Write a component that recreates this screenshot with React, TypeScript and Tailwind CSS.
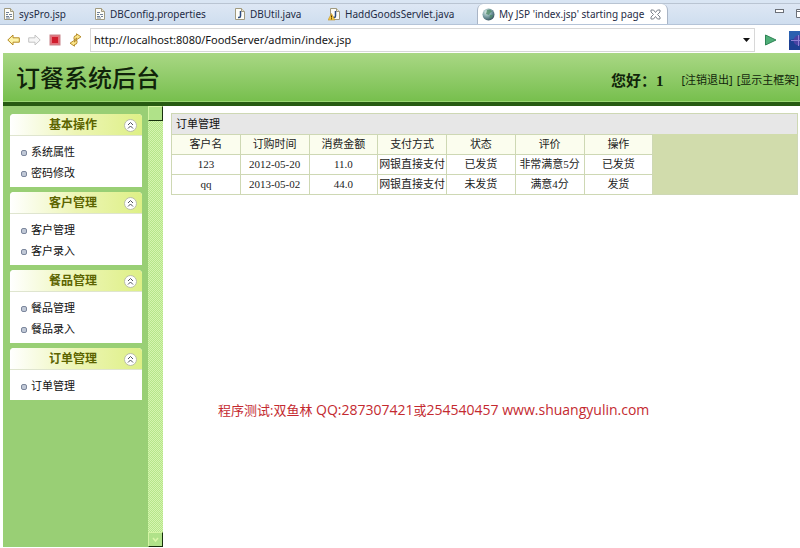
import React from "react";

const MENU = [
  { title: "基本操作", items: ["系统属性", "密码修改"] },
  { title: "客户管理", items: ["客户管理", "客户录入"] },
  { title: "餐品管理", items: ["餐品管理", "餐品录入"] },
  { title: "订单管理", items: ["订单管理"] },
];

const COLUMNS = ["客户名", "订购时间", "消费金额", "支付方式", "状态", "评价", "操作"];

const ORDERS = [
  ["123", "2012-05-20", "11.0", "网银直接支付", "已发货", "非常满意5分", "已发货"],
  ["qq", "2013-05-02", "44.0", "网银直接支付", "未发货", "满意4分", "发货"],
];

type FileKind = "text" | "java" | "warning";

const TABS: { name: string; kind: FileKind; width: string }[] = [
  { name: "sysPro.jsp", kind: "text", width: "w-[91px]" },
  { name: "DBConfig.properties", kind: "text", width: "w-[140px]" },
  { name: "DBUtil.java", kind: "java", width: "w-[95px]" },
  { name: "HaddGoodsServlet.java", kind: "warning", width: "w-[149px]" },
];

function FileIcon({ kind }: { kind: FileKind }) {
  return (
    <svg width="13" height="14" viewBox="0 0 13 14" className="shrink-0" aria-hidden="true">
      <path d="M2.5 1.5h6l3 3v8h-9z" fill="#fdfdf8" stroke="#a09a80" />
      <path d="M8.5 1.5v3h3" fill="#e8e2c8" stroke="#a09a80" />
      {kind === "text" ? (
        <path d="M4 5.5h3M4 7.5h2m1 0h3M4 9.5h3m1 0h2M4 11h4" stroke="#6f8098" />
      ) : (
        <path d="M7.5 4v5q0 1.5-1.5 1.5h-1" fill="none" stroke="#2d4d80" strokeWidth="1.5" />
      )}
      {kind === "warning" && (
        <>
          <path d="M3.5 6.5L7 13H0z" fill="#f5c83c" stroke="#c2922a" strokeWidth=".6" />
          <path d="M3.5 8.5v2m0 .8v1" stroke="#4a3200" />
        </>
      )}
    </svg>
  );
}

function GlobeIcon() {
  return (
    <svg width="13" height="13" viewBox="0 0 13 13" className="shrink-0" aria-hidden="true">
      <defs>
        <radialGradient id="globe" cx=".35" cy=".3" r=".8">
          <stop offset="0" stopColor="#dfeee9" />
          <stop offset=".5" stopColor="#7a9fa4" />
          <stop offset="1" stopColor="#2c4654" />
        </radialGradient>
      </defs>
      <circle cx="6.5" cy="6.5" r="6" fill="url(#globe)" />
      <path d="M5 2l3-.5 2 2-2 1.5-1 2-3-1zM8 7l3 0-1.5 3-2 .5z" fill="#4f8a68" opacity=".8" />
    </svg>
  );
}

function Tabs() {
  return (
    <div className="flex h-[25px] overflow-hidden border-b border-[#b5c4d8] bg-[#d9e5f3] pt-[3px] text-[10px] text-[#1e2b45]">
      <div className="flex min-w-0 flex-1 border-t border-[#b9c4d2] bg-linear-to-b from-[#dde7f4] to-[#cfdeef] pl-0.5">
        {TABS.map((tab) => (
          <button key={tab.name} className={`flex shrink-0 items-center gap-1 ${tab.width}`}>
            <FileIcon kind={tab.kind} />
            <span className="whitespace-nowrap">{tab.name}</span>
          </button>
        ))}
        <div className="flex w-[191px] shrink-0 items-center gap-1 rounded-t-md border-x border-[#a9b5c6] bg-white pl-1">
          <GlobeIcon />
          <button className="whitespace-nowrap">My JSP &apos;index.jsp&apos; starting page</button>
          <button aria-label="Close tab" className="ml-auto mr-1.5">
            <svg width="11" height="11" viewBox="0 0 11 11" fill="#fff" stroke="#7d838c">
              <path d="M1 1h2.5l2 2.5 2-2.5H10v2L7.5 5.5 10 8v2H7.5l-2-2.5-2 2.5H1V8l2.5-2.5L1 3z" />
            </svg>
          </button>
        </div>
        <div className="ml-auto flex items-start gap-3 pt-[5px]">
          <button aria-label="Minimize">
            <svg width="9" height="4" viewBox="0 0 9 4">
              <rect x=".5" y=".5" width="8" height="3" fill="#fff" stroke="#6b7078" />
            </svg>
          </button>
          <button aria-label="Maximize" className="w-1 overflow-hidden">
            <svg width="9" height="9" viewBox="0 0 9 9" className="max-w-none">
              <path d="M.5.5h8v8h-8zM.5 2.5h8" fill="#fff" stroke="#6b7078" />
            </svg>
          </button>
        </div>
      </div>
    </div>
  );
}

function AddressBar() {
  return (
    <div className="flex h-7 items-start overflow-hidden bg-white pl-[7px] pt-[3px]">
      <div className="flex h-6 items-center gap-2 pr-2">
        <button aria-label="Back">
          <svg width="13" height="12" viewBox="0 0 13 12">
            <path d="M.8 6L6 1v2.8h6.3v4.4H6V11z" fill="#fdf3a8" stroke="#b58a22" />
          </svg>
        </button>
        <button aria-label="Forward">
          <svg width="13" height="12" viewBox="0 0 13 12">
            <path d="M12.2 6L7 1v2.8H.7v4.4H7V11z" fill="#f6f6f6" stroke="#c3c3c3" />
          </svg>
        </button>
        <button aria-label="Stop">
          <svg width="12" height="12" viewBox="0 0 12 12">
            <rect x="1" y="1" width="10" height="10" fill="#e4707a" stroke="#c8848a" />
            <rect x="3" y="3" width="6" height="6" fill="#d01c2c" />
          </svg>
        </button>
        <button aria-label="Refresh">
          <svg width="13" height="14" viewBox="0 0 13 14" fill="#fbe58a" stroke="#b08420" strokeWidth=".9">
            <path d="M5 6.5V4.5q0-2 2.5-2V.8l4.500 3-4.500 3V5q-.8 0-.8 1.500z" />
            <path d="M8 7.5v2q0 2-2.5 2v1.700L1 10.200l4.500-3V9q.8 0 .8-1.500z" />
          </svg>
        </button>
      </div>
      <div className="flex h-6 min-w-0 flex-1 items-center border border-[#d8d8d8] pr-1">
        <input
          aria-label="Address"
          defaultValue="http://localhost:8080/FoodServer/admin/index.jsp"
          className="min-w-0 flex-1 bg-transparent pl-[3px] text-[11px] text-[#151515] outline-none"
        />
        <button aria-label="History">
          <svg width="7" height="4" viewBox="0 0 7 4">
            <path d="M0 0h7L3.5 4z" fill="#111" />
          </svg>
        </button>
      </div>
      <div className="flex h-6 items-center gap-3 pl-[9px]">
        <button aria-label="Go">
          <svg width="13" height="12" viewBox="0 0 13 12">
            <path d="M1.5 1L12 6 1.5 11z" fill="#4fae78" stroke="#2f8455" />
          </svg>
        </button>
        <button aria-label="Open browser" className="w-[11px] overflow-hidden">
          <svg width="19" height="19" viewBox="0 0 19 19" className="max-w-none">
            <rect width="19" height="19" fill="#1d3f92" />
            <path d="M0 0h19v5L0 9z" fill="#2a60b0" />
            <circle cx="9.500" cy="9.500" r="5" fill="#4a42a4" />
            <path d="M2 9.5h15M9.5 4v11" stroke="#8f80d4" />
          </svg>
        </button>
      </div>
    </div>
  );
}

function Header() {
  return (
    <header className="flex h-[53px] items-center border-b-4 border-[#265a12] bg-linear-to-b from-[#a9d784] to-[#76bf4c] pl-[13px] text-[#10240a] shadow-[inset_0_-1px_0_#9ad673]">
      <h1 className="text-[24px] font-medium">订餐系统后台</h1>
      <div className="ml-auto flex items-center whitespace-nowrap pr-px pt-1.5">
        <strong className="mr-[18px] text-[15px]">
          您好：<span className="font-['Liberation_Serif']">1</span>
        </strong>
        <div className="flex gap-1 text-[11px]">
          <a href="#logout">[注销退出]</a>
          <a href="#frame">[显示主框架]</a>
        </div>
      </div>
    </header>
  );
}

function MenuCard({ title, items }: { title: string; items: string[] }) {
  return (
    <section className="rounded-t bg-white">
      <div className="flex h-[22px] items-center rounded-t bg-linear-to-r from-white via-[#edf5b4] to-[#def086] pl-[39px] pr-[5px] shadow-[inset_0_-1px_0_#dfe5cf]">
        <h2 className="text-[12px] font-bold text-[#5c6400]">{title}</h2>
        <button aria-label={`收起${title}`} className="ml-auto">
          <svg width="13" height="13" viewBox="0 0 13 13">
            <circle cx="6.5" cy="6.5" r="6" fill="#fff" stroke="#b9bda8" />
            <path d="M4 6l2.5-2.500L9 6M4 9.500L6.500 7 9 9.500" fill="none" stroke="#50545c" />
          </svg>
        </button>
      </div>
      <ul className="pb-[3px] pt-1.5">
        {items.map((item) => (
          <li key={item} className="flex h-[21px] items-center gap-1 pl-[11px]">
            <svg width="6" height="6" viewBox="0 0 6 6" aria-hidden="true">
              <rect x=".5" y=".5" width="5" height="5" rx="1.5" fill="#c0c8d6" stroke="#7c879c" />
            </svg>
            <a href="#menu" className="text-[11px] text-[#111]">
              {item}
            </a>
          </li>
        ))}
      </ul>
    </section>
  );
}

function Splitter() {
  return (
    <div className="flex w-[15px] shrink-0 flex-col justify-between bg-[repeating-conic-gradient(#b5e58a_0_25%,#d6f5b0_0_50%)] bg-size-[2px_2px]">
      <button
        aria-label="Scroll up"
        className="h-[15px] border border-[#d4f5a4] border-b-[#16300c] border-r-[#16300c] bg-[#b0e289]"
      />
      <button
        aria-label="Scroll down"
        className="flex h-[15px] items-center justify-center border border-[#d4f5a4] border-b-[#16300c] border-r-[#16300c] bg-[#b0e289]"
      >
        <svg width="7" height="6" viewBox="0 0 7 6">
          <path d="M1 1l2.5 3L6 1" fill="none" stroke="#d9f7a8" strokeWidth="1.5" />
        </svg>
      </button>
    </div>
  );
}

function OrderTable() {
  return (
    <div className="border border-[#ced8b4] bg-[#d1dcac]">
      <h2 id="orders" className="h-5 bg-[#e7e7e7] pl-1 text-[11px] leading-5 text-[#111]">
        订单管理
      </h2>
      <table
        aria-labelledby="orders"
        className="w-[77%] table-fixed border-separate border-spacing-0 whitespace-nowrap text-center font-['Liberation_Serif','Noto_Sans_CJK_SC',serif] text-[11px] leading-[19px] text-[#1c1c1c]"
      >
        <thead>
          <tr className="bg-[#fbfdee]">
            {COLUMNS.map((col) => (
              <th key={col} className="border-r border-t border-[#ced8b4] p-0 font-normal">
                {col}
              </th>
            ))}
          </tr>
        </thead>
        <tbody>
          {ORDERS.map((order) => (
            <tr key={order[0]} className="bg-white">
              {order.map((value, i) => (
                <td key={i} className="border-r border-t border-[#ced8b4] p-0">
                  {value}
                </td>
              ))}
            </tr>
          ))}
        </tbody>
      </table>
    </div>
  );
}

export default function App() {
  return (
    <div className="flex min-h-screen flex-col bg-white font-['Noto_Sans','Noto_Sans_CJK_SC',sans-serif]">
      <Tabs />
      <AddressBar />
      <div className="flex flex-1 flex-col pb-px pl-[3px]">
        <Header />
        <div className="flex flex-1">
          <nav className="flex w-[145px] shrink-0 flex-col gap-[5px] bg-[#99cf75] pl-[7px] pr-[6px] pt-2">
            {MENU.map((group) => (
              <MenuCard key={group.title} {...group} />
            ))}
          </nav>
          <Splitter />
          <main className="min-w-0 flex-1 pl-2 pr-0.5 pt-[7px]">
            <OrderTable />
            <p className="mt-[205px] whitespace-nowrap pl-[47px] font-['Open_Sans','Noto_Sans_CJK_SC',sans-serif] text-[14px] leading-5 text-[#c42a30]">
              <span className="text-[13px]">程序测试:双鱼林</span> QQ:287307421
              <span className="text-[13px]">或</span>254540457 www.shuangyulin.com
            </p>
          </main>
        </div>
      </div>
    </div>
  );
}
